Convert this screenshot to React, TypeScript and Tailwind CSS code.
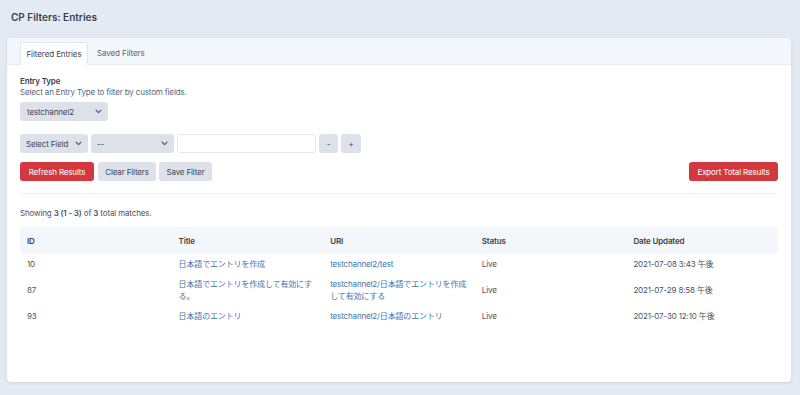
import React from "react";

const Chevron = () => (
  <svg width="7" height="5" viewBox="0 0 7 5" className="shrink-0">
    <path d="M1 1.2 L3.5 3.7 L6 1.2" fill="none" stroke="#4b5563" strokeWidth="1.2" strokeLinecap="round" strokeLinejoin="round" />
  </svg>
);

const rows = [
  { id: "10", title: "日本語でエントリを作成", uri: "testchannel2/test", status: "Live", date: "2021-07-08 3:43 午後" },
  { id: "87", title: "日本語でエントリを作成して有効にする。", uri: "testchannel2/日本語でエントリを作成して有効にする", status: "Live", date: "2021-07-29 8:58 午後" },
  { id: "93", title: "日本語のエントリ", uri: "testchannel2/日本語のエントリ", status: "Live", date: "2021-07-30 12:10 午後" },
];

export default function App() {
  return (
    <div
      className="w-[800px] h-[395px] bg-[#e4eaf3] px-[7px] text-[#3f4654] overflow-hidden"
      style={{ fontFamily: "Inter, 'Noto Sans CJK JP', sans-serif" }}
    >
      <div className="h-[34px] mb-[4px] flex items-center pl-[4px] text-[10px] font-semibold text-[#3a414d]">
        CP Filters: Entries
      </div>
      <div className="w-[784px] h-[344px] bg-white rounded-[4px] shadow-[0_1px_3px_rgba(60,80,120,0.15)] overflow-hidden">
        <div className="h-[27px] bg-[#f3f6fa] border-b border-[#e8ecf2] flex items-end pl-[13px] text-[8px] tracking-[-0.1px]">
          <div className="h-[23px] w-[68px] bg-white border border-b-0 border-[#e1e6ee] rounded-t-[3px] flex items-center justify-center text-[#3f4654] -mb-px">
            Filtered Entries
          </div>
          <div className="h-[22px] px-[9px] flex items-center text-[#5c6574]">Saved Filters</div>
        </div>
        <div className="px-[13px] pt-[11px] text-[8px] tracking-[-0.15px]">
          <div className="leading-[11px] font-semibold text-[#3a414d]">Entry Type</div>
          <div className="leading-[11px] text-[#5c6574]">Select an Entry Type to filter by custom fields.</div>
          <div className="mt-[4px] h-[19px] w-[88px] rounded-[3px] bg-[#dde2ea] flex items-center justify-between pl-[7px] pr-[6px] text-[#3f4654]">
            <span>testchannel2</span>
            <Chevron />
          </div>
          <div className="mt-[13px] h-[19px] flex gap-[3px]">
            <div className="w-[68px] rounded-[3px] bg-[#dde2ea] flex items-center justify-between pl-[6px] pr-[6px] text-[#3f4654]">
              <span>Select Field</span>
              <Chevron />
            </div>
            <div className="w-[83px] rounded-[3px] bg-[#dde2ea] flex items-center justify-between pl-[6px] pr-[6px] text-[#3f4654]">
              <span>--</span>
              <Chevron />
            </div>
            <div className="w-[139px] rounded-[3px] bg-white border border-[#e3e7ee]" />
            <div className="w-[19px] rounded-[3px] bg-[#dde2ea] flex items-center justify-center text-[#3f4654]">-</div>
            <div className="w-[20px] rounded-[3px] bg-[#dde2ea] flex items-center justify-center text-[#3f4654]">+</div>
          </div>
          <div className="mt-[9px] h-[19px] flex items-stretch">
            <div className="w-[74px] rounded-[3px] bg-[#d1393f] text-white flex items-center justify-center">Refresh Results</div>
            <div className="ml-[4px] w-[58px] rounded-[3px] bg-[#dde2ea] flex items-center justify-center">Clear Filters</div>
            <div className="ml-[3px] w-[53px] rounded-[3px] bg-[#dde2ea] flex items-center justify-center">Save Filter</div>
            <div className="ml-auto w-[89px] rounded-[3px] bg-[#d1393f] text-white flex items-center justify-center">Export Total Results</div>
          </div>
          <div className="mt-[12px] h-px bg-[#edf0f5]" />
          <div className="mt-[14px] leading-[11px] text-[#4a5260]">
            Showing <b className="font-semibold">3 (1 - 3)</b> of <b className="font-semibold">3</b> total matches.
          </div>
          <table className="mt-[8px] w-full table-fixed border-collapse">
            <thead>
              <tr className="bg-[#f3f6fa]">
                {["ID", "Title", "URI", "Status", "Date Updated"].map((h, i) => (
                  <th
                    key={h}
                    className={`h-[27px] px-[7px] text-left font-semibold text-[#3a414d] leading-[12px] ${i === 0 ? "rounded-l-[4px]" : ""} ${i === 4 ? "rounded-r-[4px]" : ""}`}
                  >
                    {h}
                  </th>
                ))}
              </tr>
            </thead>
            <tbody>
              {rows.map((r) => (
                <tr key={r.id} className="align-middle">
                  <td className="px-[7px] py-[4px] leading-[12px] text-[#4a5260]">{r.id}</td>
                  <td className="px-[7px] py-[4px] leading-[12px] text-[#3f74ad]">{r.title}</td>
                  <td className="px-[7px] py-[4px] leading-[12px] text-[#3f74ad]">{r.uri}</td>
                  <td className="px-[7px] py-[4px] leading-[12px] text-[#4a5260]">{r.status}</td>
                  <td className="px-[7px] py-[4px] leading-[12px] text-[#4a5260]">{r.date}</td>
                </tr>
              ))}
            </tbody>
          </table>
        </div>
      </div>
    </div>
  );
}
